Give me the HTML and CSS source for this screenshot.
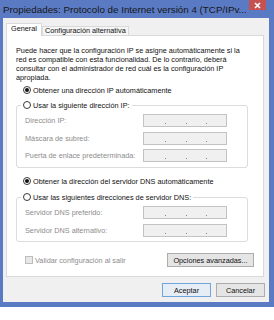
FILE: index.html
```html
<!DOCTYPE html>
<html lang="es">
<head>
<meta charset="utf-8">
<title>Propiedades</title>
<link rel="stylesheet" href="styles.css">
</head>
<body>
<div class="window">
  <div class="titlebar">
    <span class="title">Propiedades: Protocolo de Internet versión 4 (TCP/IPv...</span>
    <span class="close"><svg width="7" height="7" viewBox="0 0 7 7"><path d="M1 1L6 6M6 1L1 6" stroke="#fff" stroke-width="1.6"/></svg></span>
  </div>
  <div class="dialog">
    <div class="tabs">
      <div class="tab active">General</div>
      <div class="tab">Configuración alternativa</div>
    </div>
    <div class="panel">
      <p class="intro">Puede hacer que la configuración IP se asigne automáticamente si la<br>red es compatible con esta funcionalidad. De lo contrario, deberá<br>consultar con el administrador de red cuál es la configuración IP<br>apropiada.</p>
      <div class="opt first"><span class="radio on"></span>Obtener una dirección IP automáticamente</div>
      <fieldset class="group g1">
        <legend><span class="opt-in"><span class="radio"></span>Usar la siguiente dirección IP:</span></legend>
        <div class="rows">
          <div class="field"><span class="lbl">Dirección IP:</span><span class="ip"><i></i><i></i><i></i></span></div>
          <div class="field"><span class="lbl">Máscara de subred:</span><span class="ip"><i></i><i></i><i></i></span></div>
          <div class="field"><span class="lbl">Puerta de enlace predeterminada:</span><span class="ip"><i></i><i></i><i></i></span></div>
        </div>
      </fieldset>
      <div class="opt second"><span class="radio on"></span>Obtener la dirección del servidor DNS automáticamente</div>
      <fieldset class="group g2">
        <legend><span class="opt-in"><span class="radio"></span>Usar las siguientes direcciones de servidor DNS:</span></legend>
        <div class="rows">
          <div class="field"><span class="lbl">Servidor DNS preferido:</span><span class="ip"><i></i><i></i><i></i></span></div>
          <div class="field"><span class="lbl">Servidor DNS alternativo:</span><span class="ip"><i></i><i></i><i></i></span></div>
        </div>
      </fieldset>
      <div class="footer-row">
        <span class="check"><span class="box"></span>Validar configuración al salir</span>
        <span class="btn adv">Opciones avanzadas...</span>
      </div>
    </div>
    <div class="actions">
      <span class="btn default">Aceptar</span>
      <span class="btn">Cancelar</span>
    </div>
  </div>
</div>
</body>
</html>
```
FILE: styles.css
```css
* { box-sizing: border-box; }
body {
  margin: 0;
  background: #ffffff;
  font-family: "Liberation Sans", Arial, sans-serif;
  font-size: 7.3px;
  color: #111111;
}
.window {
  width: 274px;
  background: #5a7bc4;
  padding: 0 5px 5px 3px;
}
.titlebar {
  height: 18px;
  display: flex;
  align-items: flex-start;
}
.title {
  font-size: 9.8px;
  line-height: 19px;
  color: #161616;
  white-space: nowrap;
}
.close {
  margin-left: auto;
  margin-right: 3px;
  width: 17px;
  height: 10px;
  background: #c75050;
  display: flex;
  align-items: center;
  justify-content: center;
}
.dialog {
  background: #f0f0f0;
  padding: 5px 4px 5px 3px;
}
.tabs {
  display: flex;
  align-items: flex-end;
  height: 13px;
  margin-bottom: -1px;
  position: relative;
  z-index: 1;
}
.tab {
  height: 9px;
  line-height: 8px;
  padding: 0 2px;
  margin-bottom: 1px;
  border: 1px solid #d9d9d9;
  border-bottom: 0;
  background: #f5f5f5;
  white-space: nowrap;
}
.tab.active {
  height: 13px;
  line-height: 10px;
  padding: 0 4px;
  margin-bottom: 0;
  background: #ffffff;
}
.panel {
  background: #ffffff;
  border: 1px solid #d9d9d9;
  margin-right: 1px;
  padding: 10px 9px 9px 9px;
}
.intro {
  margin: 0;
  line-height: 9px;
  white-space: nowrap;
}
.opt, .opt-in {
  display: flex;
  align-items: center;
  gap: 2px;
  height: 9px;
  line-height: 9px;
  white-space: nowrap;
}
.opt { margin-left: 7px; }
.opt.first { margin-top: 3.5px; margin-bottom: 6px; }
.opt.second { margin-top: 8.5px; margin-bottom: 7px; }
.radio {
  width: 8px;
  height: 8px;
  border: 1px solid #3a3a3a;
  border-radius: 50%;
  background: #ffffff;
  display: inline-flex;
  align-items: center;
  justify-content: center;
  flex: none;
}
.radio.on::after {
  content: "";
  width: 4px;
  height: 4px;
  border-radius: 50%;
  background: #111111;
}
.group {
  margin: 0 6px 0 0;
  padding: 0 20px 5px 4px;
  border: 1px solid #dcdcdc;
  border-radius: 3px;
  min-width: 0;
}
.group legend {
  padding: 0 2px;
}
.rows {
  display: flex;
  flex-direction: column;
  gap: 4.5px;
  padding-top: 4.5px;
}
.g2 { padding-bottom: 4.5px; }
.field {
  display: flex;
  align-items: center;
  padding-left: 4px;
  height: 13px;
}
.lbl {
  flex: 1;
  color: #8c8c8c;
  white-space: nowrap;
}
.ip {
  width: 84px;
  height: 13px;
  border: 1px solid #c3c3c3;
  background: #f0f0f0;
  display: flex;
  align-items: flex-end;
  gap: 19.5px;
  padding: 0 0 2px 21px;
}
.ip i {
  width: 1px;
  height: 1px;
  background: #8a8a8a;
}
.footer-row {
  display: flex;
  align-items: center;
  justify-content: space-between;
  margin-top: 11px;
}
.check {
  display: flex;
  align-items: center;
  gap: 2px;
  margin-left: 9px;
  color: #8c8c8c;
  white-space: nowrap;
}
.box {
  width: 8px;
  height: 8px;
  border: 1px solid #bcbcbc;
  background: #e8e8e8;
}
.btn {
  display: flex;
  align-items: center;
  justify-content: center;
  height: 14px;
  border: 1px solid #adadad;
  background: #e5e5e5;
  color: #111111;
  white-space: nowrap;
}
.btn.adv { width: 87px; }
.actions {
  display: flex;
  justify-content: flex-end;
  gap: 5px;
  margin-top: 6px;
}
.actions .btn { width: 49px; }
.btn.default {
  border-color: #6ea5dc;
  background: #e6edf5;
}
```
